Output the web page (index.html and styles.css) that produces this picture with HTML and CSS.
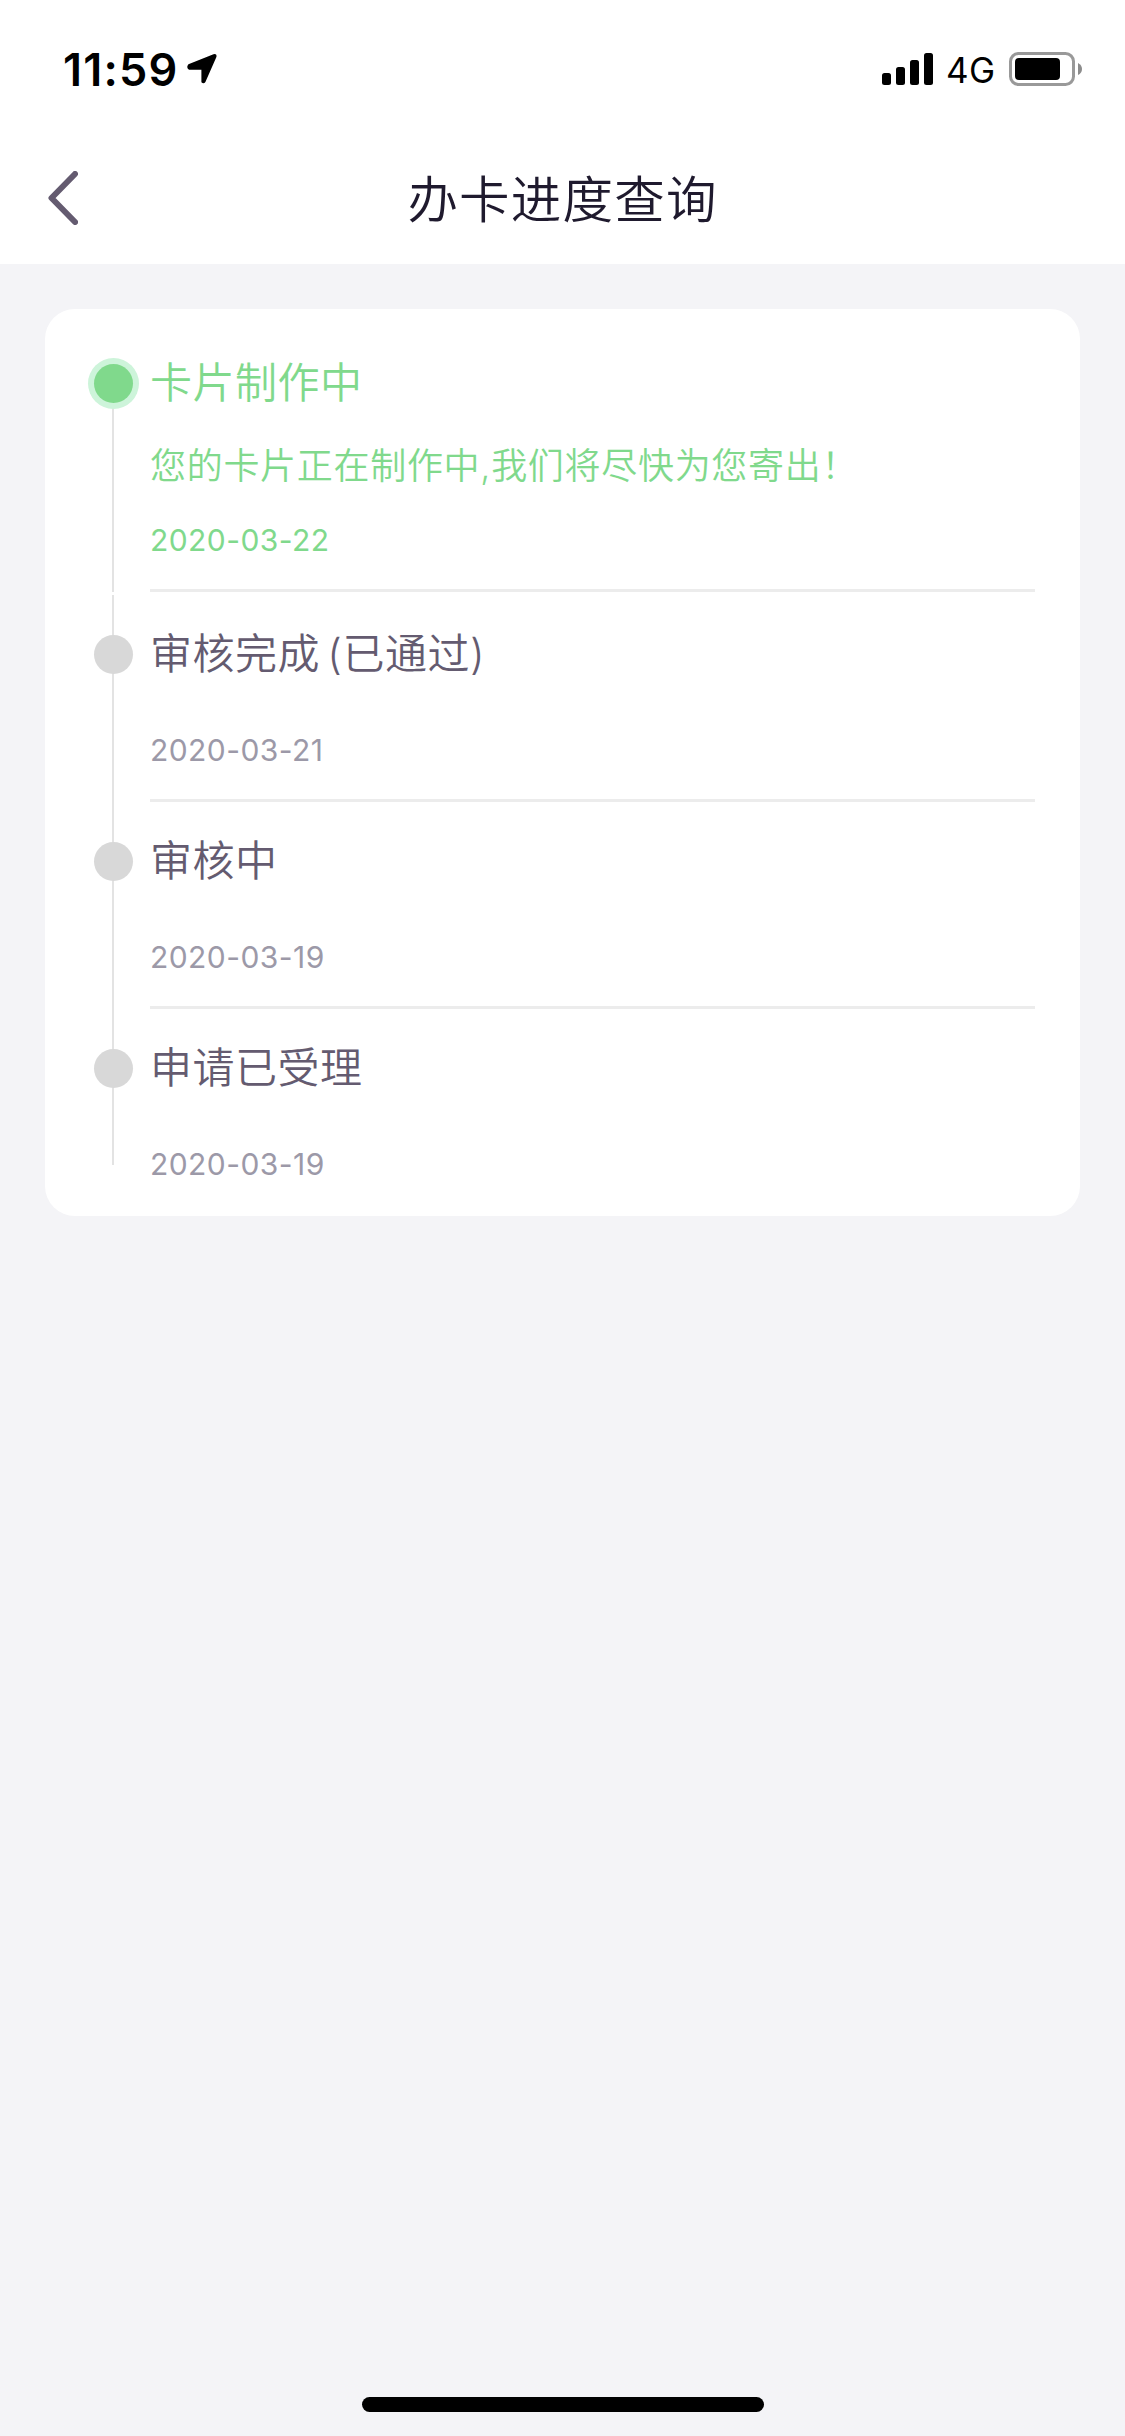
FILE: index.html
```
<!DOCTYPE html>
<html lang="zh-CN">
<head>
<meta charset="utf-8">
<title>办卡进度查询</title>
<link rel="stylesheet" href="styles.css">
</head>
<body>
<div class="screen">
  <header class="header">
    <div class="status-bar">
      <div class="status-left">
        <span class="clock">11:59</span>
        <svg class="location" width="30" height="30" viewBox="0 0 30 30"><path d="M1.400 10.200 26.500.2Q30.200-.7 29.400 3L18.400 28Q16.800 30.300 14.400 28.300V15.700H2Q-1.200 13.400 1.400 10.200Z"/></svg>
      </div>
      <div class="status-right">
        <svg class="signal" width="51" height="32" viewBox="0 0 51 32"><rect y="20" width="9" height="12" rx="2.500"/><rect x="14" y="14" width="9" height="18" rx="2.500"/><rect x="28" y="7" width="9" height="25" rx="2.500"/><rect x="42" width="9" height="32" rx="2.500"/></svg>
        <span class="network">4G</span>
        <svg class="battery" width="73" height="34" viewBox="0 0 73 34"><rect x="1.500" y="1.500" width="63" height="31" rx="8" fill="none" stroke="#999" stroke-width="3"/><rect x="6" y="6" width="45" height="22" rx="4"/><path d="M69 11Q73 13 73 17T69 23Z" fill="#8c8c8c"/></svg>
      </div>
    </div>
    <nav class="nav">
      <svg class="back" width="30" height="54" viewBox="0 0 30 54"><path d="M27 3 3.500 27 27 51"/></svg>
      <h1 class="nav-title">办卡进度查询</h1>
      <span class="nav-spacer"></span>
    </nav>
  </header>
  <main class="content">
    <ol class="timeline">
      <li class="step step-current">
        <div class="rail"><span class="dot"></span></div>
        <div class="body">
          <h2 class="step-title">卡片制作中</h2>
          <p class="step-desc">您的卡片正在制作中,我们将尽快为您寄出&#xFF01;</p>
          <time class="step-date">2020-03-22</time>
        </div>
      </li>
      <li class="step">
        <div class="rail"><span class="dot"></span></div>
        <div class="body">
          <h2 class="step-title">审核完成 (已通过)</h2>
          <time class="step-date">2020-03-21</time>
        </div>
      </li>
      <li class="step">
        <div class="rail"><span class="dot"></span></div>
        <div class="body">
          <h2 class="step-title">审核中</h2>
          <time class="step-date">2020-03-19</time>
        </div>
      </li>
      <li class="step step-last">
        <div class="rail"><span class="dot"></span></div>
        <div class="body">
          <h2 class="step-title">申请已受理</h2>
          <time class="step-date">2020-03-19</time>
        </div>
      </li>
    </ol>
  </main>
  <footer class="home"><span class="home-bar"></span></footer>
</div>
</body>
</html>
```
FILE: styles.css
```
* { box-sizing: border-box; }
body, h1, h2, p, ol { margin: 0; padding: 0; }
body {
  background: #f4f4f7;
  font-family: Inter, "Noto Sans CJK SC", sans-serif;
}
.screen {
  display: flex;
  flex-direction: column;
  width: 1125px;
  height: 2436px;
}
.header { height: 264px; background: #fff; }
.status-bar {
  display: flex;
  justify-content: space-between;
  height: 132px;
  padding: 0 43px 0 63px;
}
.status-left, .status-right { display: flex; }
.clock {
  width: 124px;
  margin-top: 43px;
  font-size: 45px;
  font-weight: 600;
  letter-spacing: 1.2px;
  line-height: 54px;
  white-space: nowrap;
}
.location { margin-top: 54px; }
.signal { margin-top: 53px; }
.network {
  width: 63px;
  margin: 49px 0 0 13px;
  font-size: 35px;
  letter-spacing: .4px;
  line-height: 42px;
  white-space: nowrap;
}
.battery { margin-top: 52px; }
.nav {
  display: flex;
  justify-content: space-between;
  align-items: center;
  height: 132px;
  padding: 0 48px;
}
.back { fill: none; stroke: #645b70; stroke-width: 6; stroke-linecap: round; stroke-linejoin: round; }
.nav-title {
  padding-top: 3px;
  color: #1f1a2e;
  font-size: 50.5px;
  font-weight: 350;
  letter-spacing: 1.2px;
  line-height: 66px;
}
.nav-spacer { width: 30px; }
.content { flex: 1; padding: 45px; }
.timeline {
  background: #fff;
  border-radius: 30px;
  list-style: none;
}
.step { display: flex; height: 207px; padding-right: 45px; }
.step-current { height: 283px; margin-bottom: 3px; color: #80d98c; }
.rail {
  width: 105px;
  padding: 40px 0 0 49px;
  background: linear-gradient(#e3e3e3, #e3e3e3) 67px 0 / 2px 100% no-repeat;
}
.step-current .rail {
  padding-top: 55px;
  background-position: 67px 100%;
  background-size: 2px 200px;
}
.step-last .rail { background-size: 2px 156px; }
.dot {
  display: block;
  width: 39px;
  height: 39px;
  border-radius: 50%;
  background: #d8d8d8;
}
.step-current .dot { background: #80d98c; box-shadow: 0 0 0 6px #cdf4da; }
.body {
  display: flex;
  flex: 1;
  flex-direction: column;
  border-bottom: 3px solid #ececec;
}
.step-last .body { border-bottom: 0; }
.step-title {
  margin-top: 29px;
  color: #645b70;
  font-size: 42px;
  font-weight: 350;
  letter-spacing: .5px;
  word-spacing: -5px;
  line-height: 60px;
}
.step-date {
  margin-top: 48px;
  color: #9c99a8;
  font-size: 30px;
  letter-spacing: .45px;
  line-height: 36px;
}
.step-current .step-title { margin-top: 44px; color: inherit; }
.step-desc { margin-top: 27px; font-size: 36px; font-weight: 350; letter-spacing: .7px; line-height: 52px; }
.step-current .step-date { margin-top: 30px; color: inherit; }
.home { display: flex; justify-content: center; height: 39px; }
.home-bar { width: 402px; height: 15px; border-radius: 8px; background: #000; }
```
